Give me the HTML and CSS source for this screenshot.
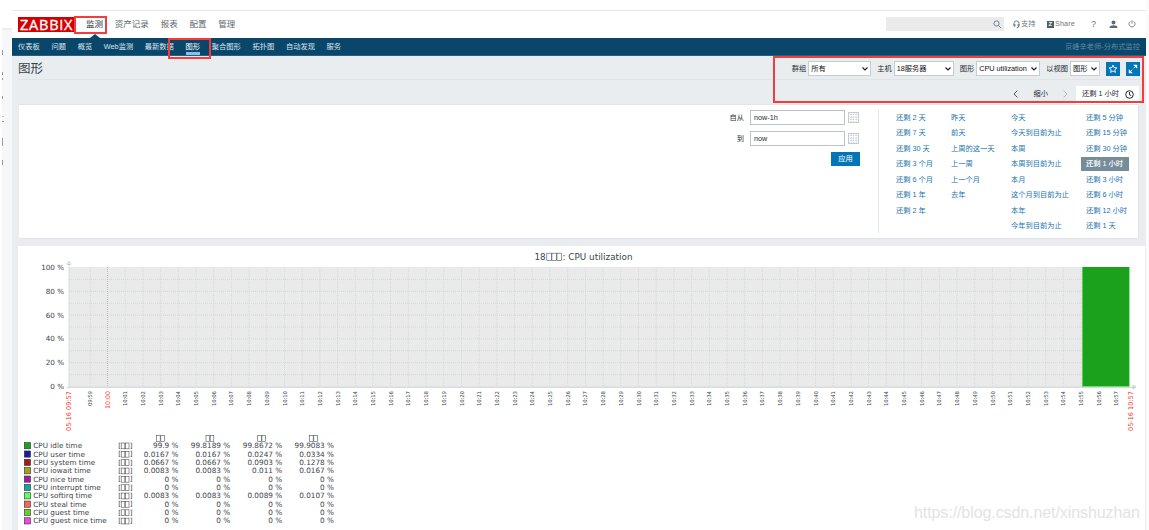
FILE: index.html
```html
<!DOCTYPE html>
<html lang="zh-CN">
<head>
<meta charset="utf-8">
<title>图形</title>
<link rel="stylesheet" href="styles.css">
</head>
<body>
<div class="page">
  <aside class="gutter"><i></i><i class="split"></i><i class="dot"></i><i class="split pale"></i><i class="tall"></i><i></i></aside>
  <main class="app">
    <header class="top">
      <div class="logo"><svg width="57" height="16"><text x="2" y="13" textLength="52.5" lengthAdjust="spacing">ZABBIX</text></svg></div>
      <nav class="menu"><a class="active">监测</a><a>资产记录</a><a>报表</a><a>配置</a><a>管理</a></nav>
      <div class="search"><svg width="9" height="9" viewBox="0 0 9 9"><circle cx="3.5" cy="3.5" r="2.6"/><path d="M5.4 5.4 8 8"/></svg></div>
      <div class="tools">
        <a class="support"><svg width="7" height="9" viewBox="0 0 7 9"><path d="M1 5.5V3.4a2.5 2.5 0 0 1 5 0V5.5M1 4v2.2h1V4.2M6 4v2.2H5V4.2M6 6.2Q6 7.6 3.6 7.8"/></svg>支持</a>
        <a class="share"><b>Z</b>Share</a>
        <a class="help">?</a>
        <a class="user"><svg width="9" height="9" viewBox="0 0 9 9"><circle cx="4.5" cy="2.6" r="2"/><path d="M.6 8V7Q1 5.2 4.5 5.2T8.4 7V8Z"/></svg></a>
        <a class="power"><svg width="8" height="8" viewBox="0 0 8 8"><path d="M2.3 1.4a3 3 0 1 0 3.4 0M4 .4v3.2"/></svg></a>
      </div>
    </header>
    <nav class="subnav"><a>仪表板</a><a>问题</a><a>概览</a><a>Web监测</a><a>最新数据</a><a class="active">图形</a><a>聚合图形</a><a>拓扑图</a><a>自动发现</a><a>服务</a><span>京峰辛老师-分布式监控</span></nav>
    <section class="heading">
      <h1>图形</h1>
      <div class="controls">
        <label>群组</label><div class="select group">所有<svg width="6" height="4" viewBox="0 0 6 4"><path d="M.5.5 3 3 5.5.5"/></svg></div>
        <label>主机</label><div class="select host">18服务器<svg width="6" height="4" viewBox="0 0 6 4"><path d="M.5.5 3 3 5.5.5"/></svg></div>
        <label>图形</label><div class="select graph">CPU utilization<svg width="6" height="4" viewBox="0 0 6 4"><path d="M.5.5 3 3 5.5.5"/></svg></div>
        <label>以视图</label><div class="select view">图形<svg width="6" height="4" viewBox="0 0 6 4"><path d="M.5.5 3 3 5.5.5"/></svg></div>
        <button class="square"><svg width="10" height="10" viewBox="0 0 10 10"><path d="m5 1.1 1.1 2.5 2.8.3-2.1 1.8.6 2.7L5 7 2.6 8.4l.6-2.7L1.1 3.9l2.8-.3Z"/></svg></button>
        <button class="square"><svg width="10" height="10" viewBox="0 0 10 10"><path class="solid" d="M5.2.8h4v4ZM.8 5.2v4h4Z"/><path d="M5.7 4.3 8 2M4.3 5.7 2 8"/></svg></button>
      </div>
    </section>
    <div class="timebar">
      <svg class="prev" width="5" height="8" viewBox="0 0 5 8"><path d="M4.3.7 1 4l3.3 3.3"/></svg>
      <span>缩小</span>
      <svg class="next" width="5" height="8" viewBox="0 0 5 8"><path d="M.7.7 4 4 .7 7.3"/></svg>
      <div class="tab">还剩 1 小时<svg width="9" height="9" viewBox="0 0 9 9"><circle cx="4.5" cy="4.5" r="3.8"/><path d="M4.5 2v2.8l1.7.8"/></svg></div>
    </div>
    <section class="filter">
      <div class="form">
        <div class="field"><label>自从</label><div class="input">now-1h</div><i class="cal"></i></div>
        <div class="field"><label>到</label><div class="input">now</div><i class="cal"></i></div>
        <button class="apply">应用</button>
      </div>
      <div class="ranges">
        <ul><li>还剩 2 天</li><li>还剩 7 天</li><li>还剩 30 天</li><li>还剩 3 个月</li><li>还剩 6 个月</li><li>还剩 1 年</li><li>还剩 2 年</li></ul>
        <ul><li>昨天</li><li>前天</li><li>上周的这一天</li><li>上一周</li><li>上一个月</li><li>去年</li></ul>
        <ul><li>今天</li><li>今天到目前为止</li><li>本周</li><li>本周到目前为止</li><li>本月</li><li>这个月到目前为止</li><li>本年</li><li>今年到目前为止</li></ul>
        <ul><li>还剩 5 分钟</li><li>还剩 15 分钟</li><li>还剩 30 分钟</li><li><b>还剩 1 小时</b></li><li>还剩 3 小时</li><li>还剩 6 小时</li><li>还剩 12 小时</li><li>还剩 1 天</li></ul>
      </div>
    </section>
    <section class="card"><svg id="chart" width="1127" height="284" viewBox="18 246 1127 284"></svg></section>
  </main>
  <div class="mark mark-menu"></div>
  <div class="mark mark-sub"></div>
  <div class="mark mark-controls"></div>
</div>
<script src="chart.js"></script>
</body>
</html>
```
FILE: styles.css
```css
* { box-sizing: border-box; }
body { margin: 0; background: #fff; font: 7.25px/10px "Liberation Sans", "Noto Sans CJK SC", sans-serif; color: #1f2c33; }
.page { position: relative; width: 1149px; height: 530px; overflow: hidden; display: flex; padding: 10px 3px 0 2px; background: linear-gradient(90deg, #fff 1146px, #fafbfc 1146px); }
.gutter { width: 10px; margin-top: 18px; background: #f5f7f9; border-top: 2px solid #ededef; display: flex; flex-direction: column; padding-top: 20px; }
.gutter i { width: 1px; height: 5px; margin-bottom: 17px; background: #9298a8; }
.gutter .split { height: 8px; margin-bottom: 16px; background: linear-gradient(#9298a8 3px, transparent 3px 6px, #9298a8 6px); }
.gutter .dot { height: 3px; margin-bottom: 17px; }
.gutter .pale { width: 2px; height: 6px; background: linear-gradient(#c3c6cb 1px, transparent 1px 5px, #9298a8 5px); }
.gutter .tall { height: 8px; margin-bottom: 14px; }
.app { width: 1134px; height: 520px; background: #e9edf0; border-top: 1px solid #e6e6e8; }
button { border: 0; padding: 0; font: inherit; }
svg { display: block; fill: none; }

.top { display: flex; height: 27px; padding: 6px 6px 0; background: #fff; align-items: flex-start; }
.logo { width: 56px; height: 15px; background: #d40000; }
.logo text { fill: #fff; font: 14.5px "Open Sans", sans-serif; stroke: #fff; stroke-width: .35; }
.menu { display: flex; gap: 11.8px; margin-left: 12px; font-size: 8.5px; line-height: 15px; color: #586870; }
.menu a { position: relative; height: 21px; white-space: nowrap; }
.menu .active { color: #1f3040; }
.menu .active::after { content: ""; position: absolute; left: 3.5px; bottom: 0; border: 5px solid transparent; border-top: 0; border-bottom: 4px solid #0a466a; }
.search { width: 118px; height: 14px; margin-left: auto; background: #ebebeb; display: flex; align-items: center; justify-content: flex-end; padding-right: 2px; }
.search svg { stroke: #71828c; }
.tools { display: flex; width: 136px; height: 14px; align-items: center; color: #68767f; }
.tools svg { stroke: #68767f; stroke-width: .9; }
.support, .share { display: flex; align-items: center; gap: 1px; }
.support { margin-left: 9px; width: 34px; }
.share { width: 44px; letter-spacing: .1px; }
.share b { width: 7px; height: 7px; background: #4d5f6a; color: #fff; font-size: 6px; line-height: 7px; text-align: center; }
.help { width: 16px; font-size: 9px; padding-left: 0; }
.user { margin-left: 2px; width: 19px; }
.user svg { fill: #5b6b76; stroke: none; }

.subnav { display: flex; gap: 11.7px; height: 18px; padding: 0 6px; background: #0a466a; color: #d9e8f0; line-height: 17px; white-space: nowrap; border-bottom: 1px solid #2c5f7f; }
.subnav .active { color: #fff; border-bottom: 3px solid #7ec4f0; }
.subnav span { margin-left: auto; color: #5e89a3; }

.heading { display: flex; justify-content: space-between; height: 24px; margin: 0 6px; border-bottom: 1px solid #dfe4e7; }
h1 { margin: 3px 0 0; font: 12.5px/18px "Noto Sans CJK SC", sans-serif; color: #35424a; }
.controls { display: flex; align-items: center; height: 25px; }
.controls label { margin: 0 2px 0 6px; white-space: nowrap; }
.select { height: 15px; border: 1px solid #c4ced3; background: #fff; padding: 0 2px 0 2px; display: flex; align-items: center; justify-content: space-between; white-space: nowrap; color: #111; }
.select svg { stroke: #222; stroke-width: 1.2; }
.group { width: 63px; }
.host { width: 60px; }
.graph { width: 64px; }
.view { width: 30px; }
.square { width: 14px; height: 14px; margin-left: 6px; background: #0275b8; display: grid; place-items: center; }
.square svg { stroke: #fff; stroke-width: .9; }
.square .solid { fill: #fff; stroke: none; }

.timebar { display: flex; justify-content: flex-end; align-items: center; height: 24px; padding: 6px 7px 0 0; line-height: 12px; }
.timebar svg { stroke: #4c5b65; margin-top: -2px; }
.timebar span { margin: -2px 15px 0; }
.timebar .next { stroke: #a9b4bb; margin-right: 8px; }
.tab { display: flex; align-items: center; justify-content: space-between; width: 63px; height: 18px; padding: 0 5px 2px 6px; background: #fff; white-space: nowrap; }
.tab svg { stroke: #1f2c33; margin: 0; }

.filter { display: flex; height: 135px; margin: 0 7px; padding: 5px 0; background: #fff; border: 1px solid #e1e5e8; border-left: 0; }
.form { width: 860px; height: 123px; border-right: 1px solid #dfe4e7; display: flex; flex-direction: column; align-items: flex-end; padding-right: 18px; gap: 6px; }
.field { display: flex; align-items: center; height: 15px; }
.field label { margin-right: 6px; }
.input { width: 95px; height: 15px; border: 1px solid #b9c3c9; padding: 2px 3px; line-height: 10px; }
.cal { width: 11px; height: 11px; margin-left: 3px; margin-right: 1px; border: 1px solid #c3ccd1; background: radial-gradient(circle at 1px 1px, #b9c3c9 .6px, transparent .8px) 1px 3px / 2.5px 2.5px; }
.apply { width: 29px; height: 14px; background: #0275b8; color: #fff; line-height: 14px; }
.ranges { display: grid; grid-template-columns: 55px 60px 75px 52px; margin-left: 17px; color: #2075ae; }
.ranges ul { list-style: none; margin: 0; padding: 0; }
.ranges li { height: 15.45px; line-height: 15px; white-space: nowrap; }
.ranges b { display: inline-block; height: 14px; margin-left: -5px; width: 48px; padding-left: 5px; background: #768d99; color: #fff; font-weight: 500; line-height: 14px; }

.card { width: 1127px; height: 284px; margin: 7px 0 0 6px; background: #fff; }
.card text { font-family: "DejaVu Sans", sans-serif; fill: #3a444a; }
.card .red { fill: #f03a3a; }
.card .watermark { font-family: "Liberation Sans", sans-serif; fill: #e3e3e3; }
.mark { position: absolute; border: 2px solid #f43c3c; }
.mark-menu { left: 74px; top: 16px; width: 33px; height: 18px; }
.mark-sub { left: 168px; top: 38px; width: 43px; height: 21px; }
.mark-controls { left: 773px; top: 56px; width: 371px; height: 47px; }
```
FILE: chart.js
```js
const out = [];
const text = (x, y, size, s, extra = "") =>
  out.push(`<text x="${x}" y="${y}" font-size="${size}" ${extra}>${s}</text>`);
const line = (x1, y1, x2, y2, color, extra = "") =>
  out.push(`<path d="M${x1} ${y1}L${x2} ${y2}" stroke="${color}" ${extra}/>`);
const vertical = (x, end, len, size, s, cls = "") =>
  text(0, 0, size, s, `class="${cls}" textLength="${len}" transform="translate(${x} ${end}) rotate(-90)"`);
// Missing-glyph boxes in the server's chart font
const boxes = (x, y, w, h, n) => {
  for (let i = 0; i < n; i++)
    out.push(`<rect x="${x + i * (w + 0.6)}" y="${y}" width="${w}" height="${h}" stroke="#4a5257" stroke-width=".6"/>`);
};

text(534.5, 260, 8.8, "18", 'textLength="11"');
boxes(546.8, 253.2, 4.5, 7.3, 3);
text(562.5, 260, 8.8, ": CPU utilization", 'textLength="70"');

out.push('<rect x="69" y="267" width="1061" height="120" fill="#eaeaea"/>');
for (let i = 1; i < 10; i++)
  line(69, 267.5 + i * 11.9, 1130, 267.5 + i * 11.9, "#cdd7d7", 'stroke-width=".9" stroke-dasharray="1 1"');
for (let i = 0; i <= 5; i++)
  text(64, 269.8 + i * 23.85, 7.2, `${100 - i * 20} %`, 'text-anchor="end"');

line(90.3, 267, 90.3, 387, "#cdd7d7", 'stroke-width=".9" stroke-dasharray="1 1"');
vertical(92.3, 406, 15, 5.4, "09:59");
for (let m = 0; m <= 57; m++) {
  const x = 107.5 + m * 17.7;
  line(x, 267, x, 387, m ? "#cdd9d9" : "#b0b8b8", 'stroke-width=".9" stroke-dasharray="1 1"');
  if (m) vertical(x + 2, 406, 15, 5.4, `10:${String(m).padStart(2, "0")}`);
  else vertical(x + 2.3, 409, 18, 6.3, "10:00", "red");
}
vertical(71.2, 431, 40, 6.6, "05-16 09:57", "red");
vertical(1132.6, 431, 40, 6.6, "05-16 10:57", "red");
out.push('<rect x="1082" y="267" width="47.6" height="120" fill="#5be35b"/><rect x="1082.8" y="267" width="46.2" height="119" fill="#1ba11b"/>');
line(69, 265, 69, 388, "#cfd6d8", 'stroke-width=".8"');
line(67, 387.3, 1134, 387.3, "#c5ced0", 'stroke-width=".9"');
out.push('<path d="M67.2 264.5 69 261.5 70.8 264.5ZM1133 385.4 1136 387.2 1133 389Z" stroke="#a9b8bd" stroke-width=".7"/>');

const ends = [178.5, 230.2, 282.2, 334];
[156.6, 206, 257.7, 309.6].forEach(x => boxes(x, 435.6, 3.6, 5.8, 2));
[
  ["idle", "#1ba11b", "99.9", "99.8189", "99.8672", "99.9083"],
  ["user", "#1b1ba8", "0.0167", "0.0167", "0.0247", "0.0334"],
  ["system", "#a11b1b", "0.0667", "0.0667", "0.0903", "0.1278"],
  ["iowait", "#a1a11b", "0.0083", "0.0083", "0.011", "0.0167"],
  ["nice", "#a11ba1", "0", "0", "0", "0"],
  ["interrupt", "#1ba1a1", "0", "0", "0", "0"],
  ["softirq", "#60ff60", "0.0083", "0.0083", "0.0089", "0.0107"],
  ["steal", "#ff6060", "0", "0", "0", "0"],
  ["guest", "#67cf2b", "0", "0", "0", "0"],
  ["guest nice", "#f047e0", "0", "0", "0", "0"]
].forEach(([name, color, ...values], i) => {
  const y = 445.6 + i * 8.35;
  out.push(`<rect x="24.3" y="${y - 3}" width="6.2" height="6.2" fill="${color}" stroke="#333" stroke-width=".6"/>`);
  text(33.3, y + 2.7, 7.25, `CPU ${name} time`);
  text(118.2, y + 2.4, 7, "[");
  boxes(121.2, y - 2.6, 3.6, 5.8, 2);
  text(129.8, y + 2.4, 7, "]");
  values.forEach((v, c) => text(ends[c], y + 2.7, 7.3, `${v} %`, 'text-anchor="end"'));
});
text(914, 517.5, 16, "https://blog.csdn.net/xinshuzhan", 'class="watermark" textLength="226"');
document.getElementById("chart").innerHTML = out.join("");
```
